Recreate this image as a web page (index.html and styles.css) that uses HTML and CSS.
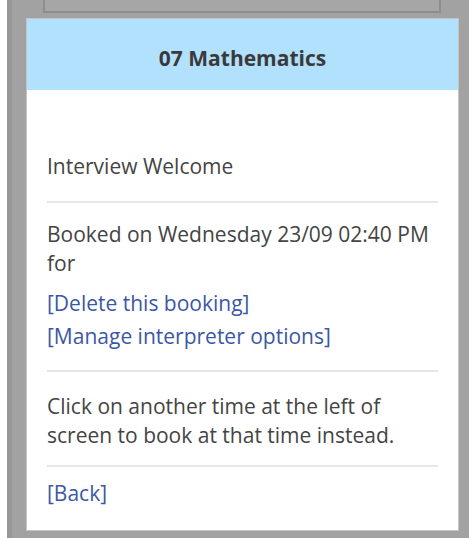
FILE: index.html
```html
<!DOCTYPE html>
<html lang="en">
<head>
<meta charset="utf-8">
<title>07 Mathematics</title>
<link rel="stylesheet" href="styles.css">
</head>
<body>
<div class="frame">
  <div class="tab-stub"></div>
  <div class="panel">
    <div class="panel-head">07 Mathematics</div>
    <div class="panel-body">
      <div class="block intro">
        <p class="line">Interview Welcome</p>
      </div>
      <div class="block booking">
        <p class="line">Booked on Wednesday 23/09 02:40 PM for</p>
        <a class="action delete" href="#">[Delete this booking]</a>
        <a class="action manage" href="#">[Manage interpreter options]</a>
      </div>
      <div class="block hint">
        <p class="line">Click on another time at the left of screen to book at that time instead.</p>
      </div>
      <div class="block back">
        <a class="action" href="#">[Back]</a>
      </div>
    </div>
  </div>
</div>
</body>
</html>
```

FILE: styles.css
```css
html, body {
  margin: 0;
  padding: 0;
  background: #ffffff;
}

body {
  font-family: "Open Sans", "Noto Sans", sans-serif;
  color: #444444;
  width: 469px;
  height: 538px;
  overflow: hidden;
}

.frame {
  margin-left: 7px;
  height: 538px;
  box-sizing: border-box;
  background: #a2a2a2;
  border-left: 5px solid #979797;
  padding: 0 11px 8px 15px;
  display: flex;
  flex-direction: column;
}

.tab-stub {
  height: 11px;
  margin: 0 17px 6px 16px;
  background: #a6a6a6;
  border: 2px solid #8e8e8e;
  border-top: none;
}

.panel {
  flex: 1;
  background: #ffffff;
  box-shadow: 0 0 0 1px #c4c4c4;
  display: flex;
  flex-direction: column;
}

.panel-head {
  height: 71px;
  box-sizing: border-box;
  padding-top: 26px;
  background: #b1e1fd;
  text-align: center;
  font-size: 21px;
  font-weight: 700;
  line-height: 26px;
  color: #3a3a3a;
}

.panel-body {
  padding: 0 20px;
}

.block {
  border-top: 2px solid #e6e6e6;
}

.block.intro {
  border-top: none;
  padding: 62px 0 20px;
}

.block.booking {
  padding: 17px 0 19px;
}

.block.hint {
  padding: 20px 0 15px;
}

.block.back {
  padding-top: 12px;
}

.line {
  margin: 0;
  font-size: 21px;
  line-height: 29px;
}

.action {
  display: block;
  font-size: 21px;
  line-height: 29px;
  color: #3b57a6;
  text-decoration: none;
}

.action.delete {
  margin-top: 11px;
}

.action.manage {
  margin-top: 4px;
}
```
